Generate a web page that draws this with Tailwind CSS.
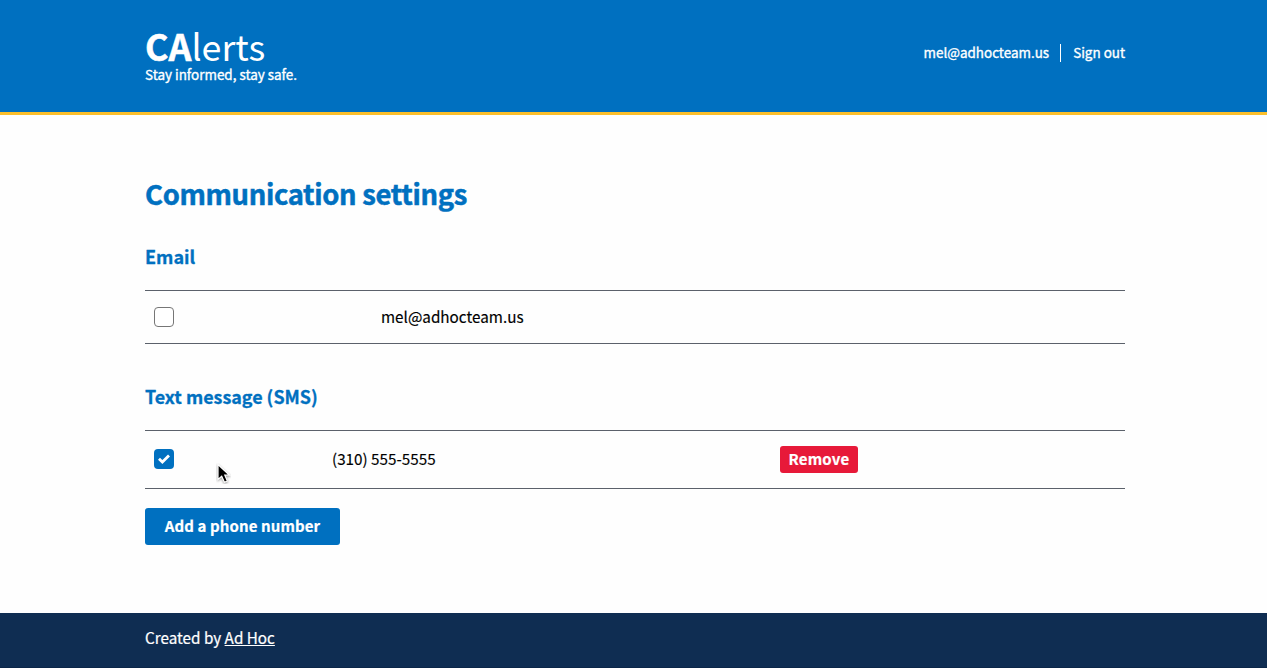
<!DOCTYPE html>
<html lang="en">
<head>
<meta charset="utf-8">
<title>CAlerts</title>
<script src="https://cdn.jsdelivr.net/npm/@tailwindcss/browser@4"></script>
</head>
<body class="flex h-[668px] flex-col overflow-hidden bg-[#fefefe] font-['Noto_Sans_CJK_SC','Noto_Sans',sans-serif] text-black antialiased">
<header class="h-[115px] shrink-0 border-b-3 border-[#fcbf2b] bg-[#0070c0] pl-[145px] text-white">
  <div class="flex w-[980px] items-start justify-between">
    <div class="pt-[26px]">
      <div class="h-[39px] text-[35.8px] leading-[38px]"><b class="[-webkit-text-stroke:0.5px_white]">CA</b>lerts</div>
      <div class="text-[13.45px] leading-[18px] [-webkit-text-stroke:0.35px_white]">Stay informed, stay safe.</div>
    </div>
    <nav class="flex items-center pt-[42px] text-[13.45px] leading-[20px] [-webkit-text-stroke:0.35px_white]"><a>mel@adhocteam.us</a><span class="mt-[2px] mr-[12px] ml-[11px] h-[18px] w-px bg-white"></span><a>Sign out</a></nav>
  </div>
</header>
<main class="ml-[145px] w-[980px] flex-1 text-[15.25px]">
  <h1 class="mt-[59px] h-[40px] text-[27.4px] leading-[39px] font-bold tracking-[-0.33px] text-[#0070c0] [-webkit-text-stroke:0.5px_#0070c0] [font-variant-ligatures:none]">Communication settings</h1>
  <section>
    <h2 class="mt-[30px] h-[24px] text-[18px] leading-[24px] font-bold text-[#0070c0] [-webkit-text-stroke:0.3px_#0070c0]">Email</h2>
    <div class="mt-[22px] flex h-[54px] items-center border-y border-[#5b616b] pl-[9px]">
      <span class="size-5 rounded-[4px] border border-[#767676] bg-white"></span>
      <span class="mb-[2px] ml-[207px] [-webkit-text-stroke:0.15px_black]">mel@adhocteam.us</span>
    </div>
  </section>
  <section>
    <h2 class="mt-[40px] h-[24px] text-[17.9px] leading-[24px] font-bold text-[#0070c0] [-webkit-text-stroke:0.3px_#0070c0]">Text message (SMS)</h2>
    <div class="mt-[22px] flex h-[59px] items-center border-y border-[#5b616b] pl-[9px]">
      <span class="mb-[1px] flex size-5 items-center justify-center rounded-[4px] bg-[#0070c0]">
        <svg class="h-[10px] w-[12px]" viewBox="0 0 12 10" fill="none" stroke="white" stroke-width="2.8"><path d="M1 4.7 4.4 8 11 1.6"/></svg>
      </span>
      <span class="mb-[2px] w-[606px] pl-[158px] [-webkit-text-stroke:0.15px_black]">(310) 555-5555</span>
      <button class="h-[27px] w-[78px] rounded-[3px] bg-[#e71939] text-center text-[15px] leading-[25px] font-bold tracking-[0.2px] text-white [-webkit-text-stroke:0.2px_white]"><span class="block h-[27px]">Remove</span></button>
    </div>
  </section>
  <button class="mt-[19px] block h-[37px] w-[195px] rounded-[3px] bg-[#0070c0] text-center text-[15px] leading-[35px] font-bold tracking-[0.1px] text-white [-webkit-text-stroke:0.2px_white]"><span class="block h-[37px]">Add a phone number</span></button>
</main>
<footer class="h-[55px] shrink-0 border-b border-[#0b2648] bg-[#0f2d52] pl-[145px] text-[15.25px] leading-[49px] text-white [-webkit-text-stroke:0.2px_white]">Created by <a class="underline">Ad Hoc</a></footer>
<svg class="absolute top-[463px] left-[216px] h-[21px] w-[15px]" viewBox="0 0 15 21"><path d="M2 1.500V16.500L5.700 13.200 8.400 19.300 11.400 18 8.800 12.200H13.500Z" fill="black" stroke="#fff" stroke-width="1.200" style="filter:drop-shadow(0 1px 1px #999)"/></svg>
</body>
</html>
